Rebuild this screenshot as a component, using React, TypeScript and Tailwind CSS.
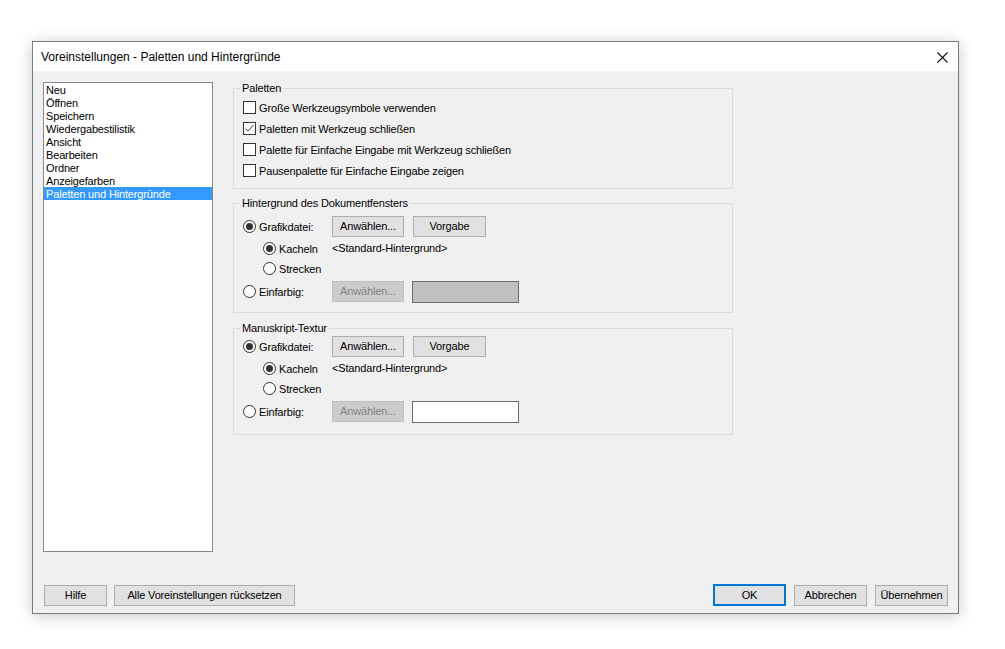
import type { ReactNode } from 'react';

const pages = [
  'Neu',
  'Öffnen',
  'Speichern',
  'Wiedergabestilistik',
  'Ansicht',
  'Bearbeiten',
  'Ordner',
  'Anzeigefarben',
  'Paletten und Hintergründe',
];

function CheckBox({ checked }: { checked?: boolean }) {
  return (
    <span className="flex h-[13px] w-[13px] shrink-0 items-center justify-center border border-[#333333] bg-white">
      {checked && (
        <svg width="11" height="11" viewBox="0 0 11 11">
          <path d="M1.5 5.5 L4 8 L9.5 2" fill="none" stroke="#3c3c3c" strokeWidth="1" />
        </svg>
      )}
    </span>
  );
}

function Radio({ checked }: { checked?: boolean }) {
  return (
    <span className="flex h-[13px] w-[13px] shrink-0 items-center justify-center rounded-full border border-[#333333] bg-white">
      {checked && <span className="h-[7px] w-[7px] rounded-full bg-[#333333]" />}
    </span>
  );
}

function Btn({ children, className = '', disabled }: { children: ReactNode; className?: string; disabled?: boolean }) {
  return (
    <button
      className={`flex h-[21px] items-center justify-center border text-[11px] leading-none ${
        disabled ? 'border-[#bfbfbf] bg-[#cccccc] text-[#838383]' : 'border-[#adadad] bg-[#e1e1e1] text-black'
      } ${className}`}
    >
      {children}
    </button>
  );
}

function Group({ title, className, children }: { title: string; className: string; children: ReactNode }) {
  return (
    <fieldset className={`border border-[#dcdcdc] px-[9px] ${className}`}>
      <legend className="-ml-[3px] px-[2px] leading-[14px]">{title}</legend>
      {children}
    </fieldset>
  );
}

// Grafikdatei / Kacheln / Strecken / Einfarbig block, same in both groups
function BackgroundOptions({ swatch }: { swatch: string }) {
  return (
    <>
      <div className="flex h-[21px] items-center">
        <label className="flex w-[89px] items-center gap-[3px]">
          <Radio checked />
          <span className="mt-[2px]">Grafikdatei:</span>
        </label>
        <Btn className="w-[72px]">Anwählen...</Btn>
        <Btn className="ml-[9px] w-[73px]">Vorgabe</Btn>
      </div>
      <div className="mt-[1px] flex h-[20px] items-center pl-[20px]">
        <label className="flex w-[69px] items-center gap-[3px]">
          <Radio checked />
          <span className="mt-[2px]">Kacheln</span>
        </label>
        <span className="mt-[1px]">&lt;Standard-Hintergrund&gt;</span>
      </div>
      <div className="flex h-[20px] items-center pl-[20px]">
        <label className="flex items-center gap-[3px]">
          <Radio />
          <span className="mt-[2px]">Strecken</span>
        </label>
      </div>
      <div className="mt-[3px] flex h-[21px] items-center">
        <label className="flex w-[89px] items-center gap-[3px]">
          <Radio />
          <span className="mt-[2px]">Einfarbig:</span>
        </label>
        <Btn disabled className="w-[72px]">Anwählen...</Btn>
        <span className={`ml-[8px] h-[22px] w-[107px] border border-[#6a6a6a] ${swatch}`} />
      </div>
    </>
  );
}

export default function App() {
  return (
    <div className="min-h-[649px] bg-white pl-[32px] pt-[41px] font-['Liberation_Sans',Arial,sans-serif] text-[11px] tracking-[-0.15px] text-black">
      <div className="flex h-[573px] w-[927px] flex-col border border-[#7a7a7a] bg-[#f0f0f0] shadow-[0_2px_14px_rgba(0,0,0,0.22)]">
        {/* Title bar */}
        <div className="flex h-[29px] shrink-0 items-center justify-between bg-white pl-[8px] pr-[10px]">
          <span className="text-[12px] tracking-normal">Voreinstellungen - Paletten und Hintergründe</span>
          <svg width="11" height="11" viewBox="0 0 11 11" className="mt-[1px]">
            <path d="M0.5 0.5 L10.5 10.5 M10.5 0.5 L0.5 10.5" stroke="#111" strokeWidth="1.1" />
          </svg>
        </div>

        <div className="flex flex-1 flex-col px-[10px] pb-[7px] pt-[11px]">
          <div className="flex flex-1 items-start">
            {/* Category list */}
            <div className="h-[470px] w-[170px] shrink-0 border border-[#828790] bg-white">
              {pages.map((p) => (
                <div
                  key={p}
                  className={`h-[13px] pl-[2px] leading-[15px] ${
                    p === 'Paletten und Hintergründe' ? 'bg-[#3399ff] text-white' : ''
                  }`}
                >
                  {p}
                </div>
              ))}
            </div>

            {/* Settings */}
            <div className="-mt-[1px] ml-[20px] flex w-[500px] flex-col">
              <Group title="Paletten" className="pb-[7px] pt-[2px]">
                {[
                  ['Große Werkzeugsymbole verwenden', false],
                  ['Paletten mit Werkzeug schließen', true],
                  ['Palette für Einfache Eingabe mit Werkzeug schließen', false],
                  ['Pausenpalette für Einfache Eingabe zeigen', false],
                ].map(([label, on]) => (
                  <label key={label as string} className="flex h-[21px] items-center gap-[3px]">
                    <CheckBox checked={on as boolean} />
                    <span className="mt-[2px]">{label}</span>
                  </label>
                ))}
              </Group>

              <Group title="Hintergrund des Dokumentfensters" className="mt-[7px] pb-[10px] pt-[6px]">
                <BackgroundOptions swatch="bg-[#c0c0c0]" />
              </Group>

              <Group title="Manuskript-Textur" className="mt-[8px] pb-[12px] pt-[1px]">
                <BackgroundOptions swatch="bg-white" />
              </Group>
            </div>
          </div>

          {/* Bottom buttons */}
          <div className="flex items-center">
            <Btn className="ml-[1px] w-[63px]">Hilfe</Btn>
            <Btn className="ml-[7px] w-[181px]">Alle Voreinstellungen rücksetzen</Btn>
            <button className="ml-auto flex h-[22px] w-[73px] items-center justify-center border-2 border-[#0078d7] bg-[#e1e1e1] text-[11px] leading-none">
              OK
            </button>
            <Btn className="ml-[8px] w-[73px]">Abbrechen</Btn>
            <Btn className="ml-[8px] w-[73px]">Übernehmen</Btn>
          </div>
        </div>
      </div>
    </div>
  );
}
